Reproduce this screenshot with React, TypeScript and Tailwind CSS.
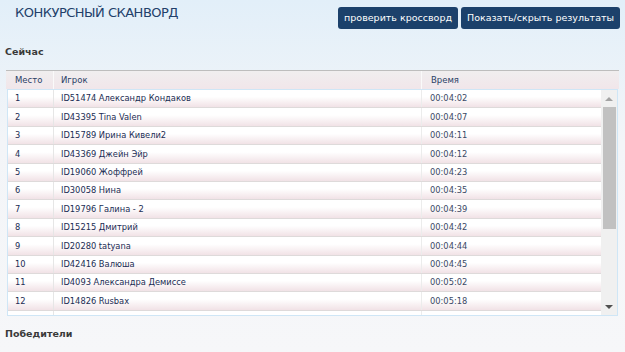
import React from 'react';

const rows = [
  ['1', 'ID51474 Александр Кондаков', '00:04:02'],
  ['2', 'ID43395 Tina Valen', '00:04:07'],
  ['3', 'ID15789 Ирина Кивели2', '00:04:11'],
  ['4', 'ID43369 Джейн Эйр', '00:04:12'],
  ['5', 'ID19060 Жоффрей', '00:04:23'],
  ['6', 'ID30058 Нина', '00:04:35'],
  ['7', 'ID19796 Галина - 2', '00:04:39'],
  ['8', 'ID15215 Дмитрий', '00:04:42'],
  ['9', 'ID20280 tatyana', '00:04:44'],
  ['10', 'ID42416 Валюша', '00:04:45'],
  ['11', 'ID4093 Александра Демиссе', '00:05:02'],
  ['12', 'ID14826 Rusbax', '00:05:18'],
  ['', '', ''],
];

function Button({ children }: { children: React.ReactNode }) {
  return (
    <button className="h-[22px] px-[6px] rounded-[3px] bg-[#1c416b] text-white text-[9.5px] leading-[22px]">
      {children}
    </button>
  );
}

export default function App() {
  return (
    <div
      className="w-[625px] h-[352px] overflow-hidden bg-gradient-to-b from-[#e2eff9] via-[#f3f5f8] via-40% to-[#f6f7f9] text-[#1b2d54]"
      style={{ fontFamily: '"DejaVu Sans", Verdana, sans-serif' }}
    >
      <div className="flex items-start justify-between pl-[15px] pr-[5px] pt-[7px]">
        <h1 className="text-[13px] leading-[16px] mt-[-2px] text-[#22406a] tracking-[-0.5px]">КОНКУРСНЫЙ СКАНВОРД</h1>
        <div className="flex gap-[3px]">
          <Button>проверить кроссворд</Button>
          <Button>Показать/скрыть результаты</Button>
        </div>
      </div>

      <h2 className="mt-[16px] ml-[5px] text-[9.5px] leading-[14px] font-bold text-[#3a3a3a]">Сейчас</h2>

      <div className="ml-[6px] mr-[6px] mt-[11px]">
        <div className="flex h-[19px] items-center border-t border-[#bdbdbd] bg-gradient-to-b from-[#f0eeef] to-[#f1e6ea] text-[8.5px] text-[#2a3f66]">
          <div className="w-[48px] h-full flex items-center pl-[9px] border-r border-[#fafafa]">Место</div>
          <div className="w-[368px] h-full flex items-center pl-[7px] border-r border-[#fafafa]">Игрок</div>
          <div className="flex-1 h-full flex items-center pl-[9px]">Время</div>
        </div>
        <div className="ml-[1px] mr-[1px] h-[227px] border border-[#cfe6f6] flex overflow-hidden">
          <div className="flex-1 overflow-hidden">
            {rows.map((r, i) => (
              <div
                key={i}
                className="flex h-[18.4px] items-center border-b border-[#dedada] bg-gradient-to-b from-white from-40% to-[#f1e2e6] text-[8.3px]"
              >
                <div className="w-[46px] h-full flex items-center pl-[7px] border-r border-[#e6e6e6]">{r[0]}</div>
                <div className="w-[368px] h-full flex items-center pl-[7px] border-r border-[#ececec]">{r[1]}</div>
                <div className="flex-1 h-full flex items-center pl-[8px] text-[#3b4a66]">{r[2]}</div>
              </div>
            ))}
          </div>
          <div className="w-[16px] bg-[#f0f0f0] flex flex-col items-center pt-[7px] pb-[6px]">
            <div className="w-0 h-0 border-l-[4px] border-r-[4px] border-b-[4px] border-l-transparent border-r-transparent border-b-[#a3a3a3]" />
            <div className="mt-[6px] w-[13px] h-[122px] bg-[#c1c1c1] ml-[1px]" />
            <div className="flex-1" />
            <div className="w-0 h-0 border-l-[4px] border-r-[4px] border-t-[4px] border-l-transparent border-r-transparent border-t-[#505050]" />
          </div>
        </div>
      </div>

      <h2 className="mt-[11px] ml-[5px] text-[9.5px] leading-[14px] font-bold text-[#3a3a3a]">Победители</h2>
    </div>
  );
}
